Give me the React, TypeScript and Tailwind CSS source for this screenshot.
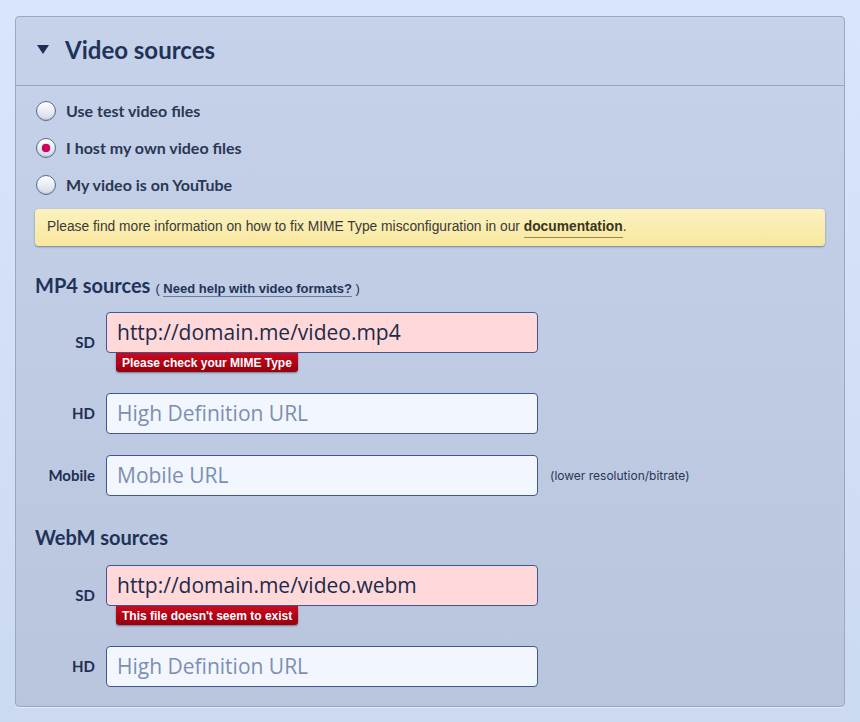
import type { ReactNode } from "react";

const head = "font-['Lato','Open_Sans',sans-serif]";
const body = "font-['Liberation_Sans','Arial',sans-serif]";
const input = "font-['Open_Sans','Liberation_Sans',sans-serif]";

function Radio({ checked, label }: { checked?: boolean; label: string }) {
	return (
		<label className="flex h-[37px] items-center gap-[10px] pl-[1px]">
			<span className="flex h-[20px] w-[20px] items-center justify-center rounded-full border border-[#5a6b8f] bg-gradient-to-b from-white to-[#d3dbea] shadow-[inset_0_-1px_1px_rgba(0,0,0,0.15)]">
				{checked && <span className="h-[8px] w-[8px] rounded-full bg-[#d4005a] shadow-[0_0_1px_#7a0033]" />}
			</span>
			<span className={`${head} text-[16px] font-bold text-[#2a3654]`}>{label}</span>
		</label>
	);
}

function Field({
	label,
	value,
	placeholder,
	error,
	note,
}: {
	label: string;
	value?: string;
	placeholder?: string;
	error?: string;
	note?: ReactNode;
}) {
	return (
		<div className="flex items-center">
			<div className={`${head} w-[60px] pr-[11px] text-right text-[15px] font-bold text-[#1f2f52]`}>{label}</div>
			<div className="flex flex-col">
				<div
					className={`${input} flex h-[41px] w-[432px] items-center rounded-[4px] border border-[#3f5893] px-[10px] text-[21px] ${
						value ? "bg-[#ffd9d9] text-[#1d2a4a]" : "bg-[#f2f6fe] text-[#7d8fb1]"
					}`}
				>
					{value ?? placeholder}
				</div>
				{error && (
					<div className="ml-[10px] self-start">
						<span className={`${body} flex h-[19px] items-center rounded-b-[3px] bg-gradient-to-b from-[#cc0a1f] to-[#96000f] px-[6px] text-[12px] font-bold text-white shadow-[0_1px_2px_rgba(0,0,0,0.4)]`}>
							{error}
						</span>
					</div>
				)}
			</div>
			{note && <div className="pl-[12px] font-['Inter',sans-serif] text-[12px] text-[#2a3654]">{note}</div>}
		</div>
	);
}

export default function App() {
	return (
		<div className="min-h-[722px] bg-gradient-to-b from-[#d9e5fd] to-[#cbd9f1] px-[15px] pt-[16px] pb-[15px]">
			<div className="rounded-[4px] border border-[#98a7c4] bg-gradient-to-b from-[#c5d2ea] to-[#b8c5dd] shadow-[0_1px_0_rgba(255,255,255,0.5)]">
				<div className="flex h-[69px] items-center border-b border-[#98a6c2] pb-[3px] pl-[21px]">
					<svg width="12" height="10" viewBox="0 0 12 10" className="mr-[16px] mt-[1px]">
						<polygon points="0,0 12,0 6,9" fill="#1d2f54" />
					</svg>
					<h2 className={`${head} text-[24px] font-bold text-[#1f3358]`}>Video sources</h2>
				</div>
				<div className="px-[19px] pt-[6px] pb-[19px]">
					<Radio label="Use test video files" />
					<Radio checked label="I host my own video files" />
					<Radio label="My video is on YouTube" />
					<div className={`${body} mt-[6px] flex h-[37px] items-center rounded-[4px] bg-gradient-to-b from-[#fcf2c0] to-[#f8e79e] px-[12px] text-[13.8px] text-[#3a3a3a] shadow-[0_1px_2px_rgba(40,50,80,0.5)]`}>
						Please find more information on how to fix MIME Type misconfiguration in our&nbsp;
						<a className="border-b border-[#9a8a4a] font-bold text-[#3a3520]">documentation</a>.
					</div>

					<div className="mt-[27px] flex items-baseline leading-[24px]">
						<h3 className={`${head} text-[20px] font-bold text-[#1f3358]`}>MP4 sources</h3>
						<span className={`${body} ml-[5px] text-[13px] text-[#1f3358]`}>
							( <a className="border-b border-[#6b7ca3] font-bold">Need help with video formats?</a> )
						</span>
					</div>
					<div className="mt-[11px] flex flex-col gap-[21px] pl-[11px]">
						<Field label="SD" value="http://domain.me/video.mp4" error="Please check your MIME Type" />
						<Field label="HD" placeholder="High Definition URL" />
						<Field label="Mobile" placeholder="Mobile URL" note="(lower resolution/bitrate)" />
					</div>

					<h3 className={`${head} mt-[29px] text-[20px] leading-[24px] font-bold text-[#1f3358]`}>WebM sources</h3>
					<div className="mt-[16px] flex flex-col gap-[21px] pl-[11px]">
						<Field label="SD" value="http://domain.me/video.webm" error="This file doesn't seem to exist" />
						<Field label="HD" placeholder="High Definition URL" />
					</div>
				</div>
			</div>
		</div>
	);
}
